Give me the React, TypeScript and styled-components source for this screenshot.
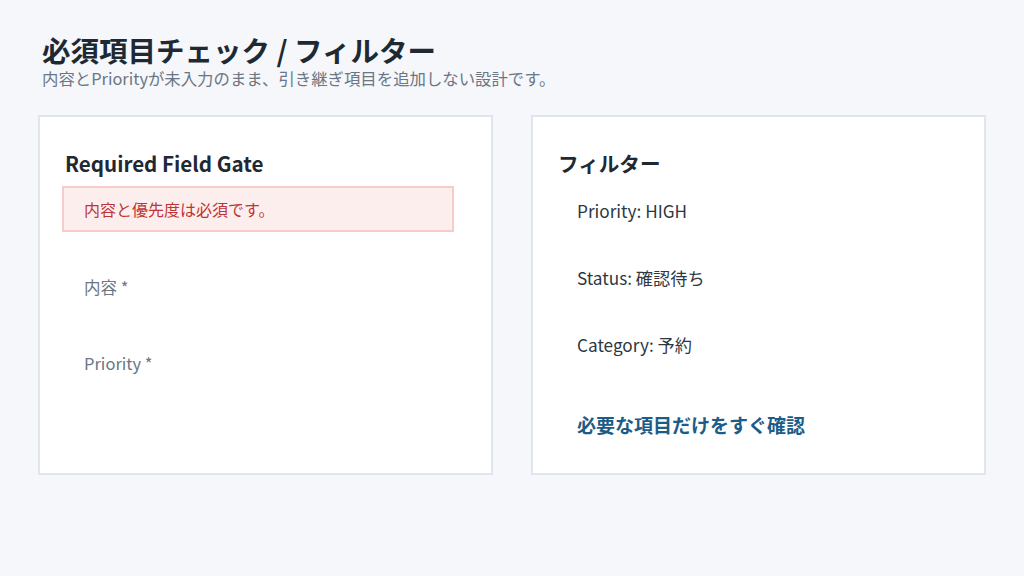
import React from "react";
import styled, { createGlobalStyle } from "styled-components";

const GlobalStyle = createGlobalStyle`
  body {
    margin: 0;
    background: #f5f7fa;
    font-family: "Noto Sans CJK JP", "Noto Sans", sans-serif;
    color: #1f2933;
  }
`;

const Page = styled.div`
  padding: 33px 38px 0;
`;

const Header = styled.header`
  padding-left: 4px;
`;

const Title = styled.h1`
  margin: 0;
  font-size: 28.5px;
  line-height: 34px;
  font-weight: 700;
  color: #1f2933;
`;

const Subtitle = styled.p`
  margin: 0;
  font-size: 16.4px;
  line-height: 22px;
  color: #6b7684;
`;

const Columns = styled.div`
  display: grid;
  grid-template-columns: 455px 455px;
  gap: 38px;
  margin-top: 26px;
`;

const Card = styled.section`
  box-sizing: border-box;
  min-height: 360px;
  background: #ffffff;
  border: 2px solid #e1e6ee;
  padding: 31px 22px 24px;
  display: flex;
  flex-direction: column;
`;

const CardTitle = styled.h2`
  margin: 0 0 8px 3px;
  font-size: 20.6px;
  line-height: 30px;
  font-weight: 700;
  color: #1f2933;
`;

const ErrorBox = styled.div`
  box-sizing: border-box;
  width: 392px;
  height: 46px;
  display: flex;
  align-items: center;
  padding-left: 20px;
  background: #fdeeee;
  border: 2px solid #f8cbcb;
  color: #bf3434;
  font-size: 16px;
`;

const FieldLabel = styled.label<{ $gap: number }>`
  display: block;
  margin-top: ${(p) => p.$gap}px;
  padding-left: 22px;
  font-size: 16.5px;
  line-height: 24px;
  color: #6b7785;
`;

const FilterList = styled.ul`
  list-style: none;
  margin: 13px 0 0;
  padding: 0 0 0 22px;
  display: flex;
  flex-direction: column;
  gap: 43px;
`;

const FilterItem = styled.li`
  font-size: 17.2px;
  line-height: 24px;
  color: #2e3742;
`;

const QuickLink = styled.a`
  display: block;
  margin-top: 54px;
  padding-left: 22px;
  font-size: 19px;
  line-height: 28px;
  font-weight: 700;
  color: #1d5c87;
  text-decoration: none;
`;

const filters = ["Priority: HIGH", "Status: 確認待ち", "Category: 予約"];

export default function App() {
  return (
    <Page>
      <GlobalStyle />
      <Header>
        <Title>必須項目チェック / フィルター</Title>
        <Subtitle>内容とPriorityが未入力のまま、引き継ぎ項目を追加しない設計です。</Subtitle>
      </Header>
      <Columns>
        <Card>
          <CardTitle>Required Field Gate</CardTitle>
          <ErrorBox>内容と優先度は必須です。</ErrorBox>
          <FieldLabel $gap={43}>内容 *</FieldLabel>
          <FieldLabel $gap={52}>Priority *</FieldLabel>
        </Card>
        <Card>
          <CardTitle>フィルター</CardTitle>
          <FilterList>
            {filters.map((f) => (
              <FilterItem key={f}>{f}</FilterItem>
            ))}
          </FilterList>
          <QuickLink href="#">必要な項目だけをすぐ確認</QuickLink>
        </Card>
      </Columns>
    </Page>
  );
}
